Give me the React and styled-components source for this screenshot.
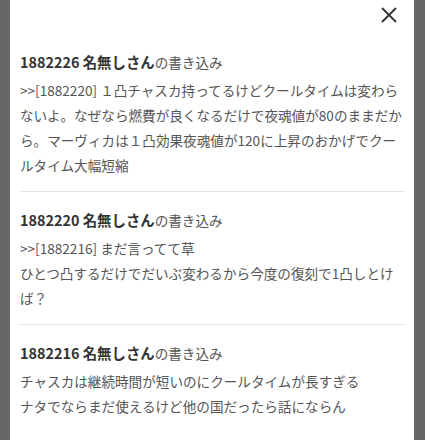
import React from "react";
import styled, { createGlobalStyle } from "styled-components";

const posts = [
    {
        id: "1882226",
        name: "名無しさん",
        lines: [
            ">>[1882220] １凸チャスカ持ってるけどクールタイムは変わらないよ。なぜなら燃費が良くなるだけで夜魂値が80のままだから。マーヴィカは１凸効果夜魂値が120に上昇のおかげでクールタイム大幅短縮",
        ],
    },
    {
        id: "1882220",
        name: "名無しさん",
        lines: [
            ">>[1882216] まだ言ってて草",
            "ひとつ凸するだけでだいぶ変わるから今度の復刻で1凸しとけば？",
        ],
    },
    {
        id: "1882216",
        name: "名無しさん",
        lines: [
            "チャスカは継続時間が短いのにクールタイムが長すぎる",
            "ナタでならまだ使えるけど他の国だったら話にならん",
        ],
    },
];

export default function App() {
    return (
        <>
            <GlobalStyle />
            <Modal>
                <TopBar>
                    <CloseButton aria-label="閉じる">
                        <svg width="16" height="16" viewBox="0 0 16 16">
                            <path
                                d="M1 1 L15 15 M15 1 L1 15"
                                stroke="#333"
                                strokeWidth="1.8"
                                fill="none"
                            />
                        </svg>
                    </CloseButton>
                </TopBar>
                {posts.map((post) => (
                    <Post key={post.id}>
                        <PostHeader>
                            {post.id} {post.name}
                            <Suffix>の書き込み</Suffix>
                        </PostHeader>
                        <PostBody>
                            {post.lines.map((line, i) => (
                                <Line key={i}>{line}</Line>
                            ))}
                        </PostBody>
                    </Post>
                ))}
            </Modal>
        </>
    );
}

const GlobalStyle = createGlobalStyle`
    html, body {
        margin: 0;
        padding: 0;
        background: #676767;
        height: 100%;
        overflow: hidden;
    }
    body {
        font-family: "Noto Sans CJK JP", "Noto Sans", sans-serif;
    }
`;

const Modal = styled.div`
    margin: 0 11px 0 10px;
    min-height: 440px;
    background: #fff;
    padding: 0 9px 0 10px;
    box-sizing: border-box;
`;

const TopBar = styled.div`
    height: 34px;
    display: flex;
    justify-content: flex-end;
    align-items: flex-start;
    padding-top: 7px;
    box-sizing: border-box;
`;

const CloseButton = styled.button`
    border: none;
    background: none;
    padding: 0;
    margin-right: 8px;
    width: 16px;
    height: 16px;
    display: flex;
    cursor: pointer;
`;

const Post = styled.div`
    padding: 16px 0 13px;
    border-bottom: 1px solid #e4e4e4;
    &:last-child {
        border-bottom: none;
    }
`;

const PostHeader = styled.div`
    font-size: 14.4px;
    font-weight: bold;
    line-height: 24px;
    color: #333;
    margin-bottom: 4px;
`;

const Suffix = styled.span`
    font-size: 13.6px;
    font-weight: normal;
    color: #555;
`;

const PostBody = styled.div`
    font-size: 13.6px;
    line-height: 25px;
    color: #555;
`;

const Line = styled.div`
    word-break: normal;
`;
